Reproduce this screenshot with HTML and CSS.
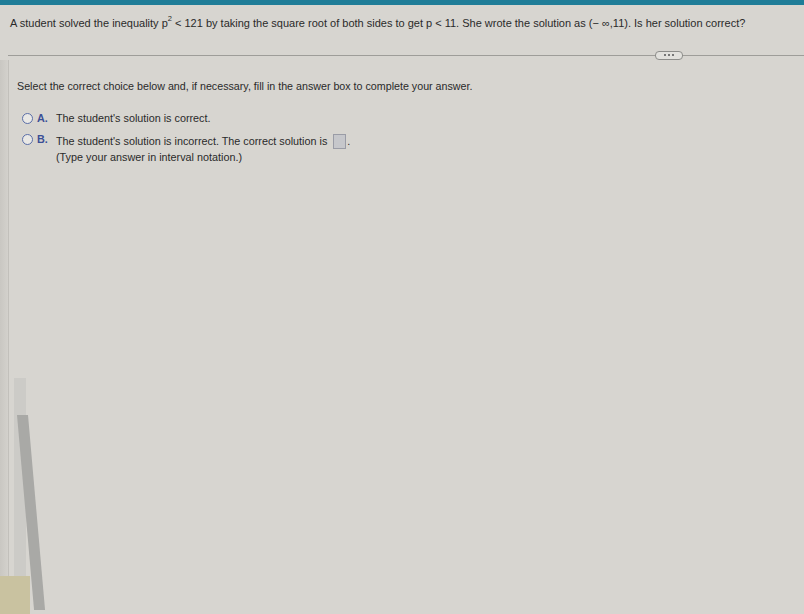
FILE: index.html
```html
<!DOCTYPE html>
<html>
<head>
<meta charset="utf-8">
<link rel="stylesheet" href="styles.css">
</head>
<body>
<div class="topbar"></div>
<div class="page">
  <div class="question">A student solved the inequality p<sup>2</sup> &lt; 121 by taking the square root of both sides to get p &lt; 11. She wrote the solution as <span class="interval">(&minus; &infin;,11)</span>. Is her solution correct?</div>
  <div class="divider">
    <div class="line"></div>
    <div class="more"><span></span><span></span><span></span></div>
    <div class="line short"></div>
  </div>
  <div class="content">
    <div class="left-col">
      <div class="track"></div>
      <div class="thumb"></div>
      <div class="patch"></div>
    </div>
    <div class="main">
      <p class="instr">Select the correct choice below and, if necessary, fill in the answer box to complete your answer.</p>
      <div class="choice">
        <span class="radio"></span><span class="letter">A.</span>
        <div class="ctext">The student's solution is correct.</div>
      </div>
      <div class="choice">
        <span class="radio"></span><span class="letter">B.</span>
        <div class="ctext">The student's solution is incorrect. The correct solution is <span class="box"></span>.<br>(Type your answer in interval notation.)</div>
      </div>
    </div>
  </div>
</div>
</body>
</html>
```
FILE: styles.css
```css
html, body {
  margin: 0;
  padding: 0;
  width: 804px;
  height: 614px;
  overflow: hidden;
  background: #d7d5d0;
  font-family: "Liberation Sans", Arial, sans-serif;
  color: #2a2a2a;
}
.topbar {
  height: 5px;
  background: #1f7d98;
}
.page {
  display: flex;
  flex-direction: column;
  height: 609px;
  overflow: hidden;
}
.question {
  font-size: 11px;
  padding: 12px 0 0 10px;
  height: 21px;
  white-space: nowrap;
}
.question sup {
  font-size: 7.5px;
  vertical-align: 6px;
  line-height: 0;
}
.divider {
  display: flex;
  align-items: center;
  margin: 12px 0 0 8px;
  height: 10px;
}
.line {
  flex: 1;
  height: 1px;
  background: #9e9d99;
}
.line.short {
  flex: 0 0 121px;
}
.more {
  width: 26px;
  height: 7px;
  border: 1px solid #8d8d8a;
  border-radius: 4px;
  background: #e2e1dd;
  display: flex;
  justify-content: center;
  align-items: center;
  gap: 2px;
}
.more span {
  width: 2px;
  height: 2px;
  background: #777;
}
.content {
  flex: 1;
  display: flex;
  position: relative;
  overflow: hidden;
}
.left-col {
  width: 8px;
  background: linear-gradient(to right, #c9c7c2, #d3d1cc);
  border-right: 1px solid #c2c0bb;
}
.track {
  position: absolute;
  left: 14px;
  top: 318px;
  width: 12px;
  height: 280px;
  background: #cccbc7;
}
.thumb {
  position: absolute;
  left: 17px;
  top: 355px;
  width: 11px;
  height: 195px;
  background: #a9a9a6;
  transform: skewX(5deg);
  transform-origin: top;
}
.patch {
  position: absolute;
  left: 0;
  bottom: 0;
  width: 30px;
  height: 38px;
  background: #c9c2a0;
}
.main {
  padding-left: 8px;
}
.instr {
  margin: 20px 0 0 0;
  font-size: 10.7px;
}
.choice {
  display: flex;
  align-items: flex-start;
  font-size: 10.8px;
  margin-left: 5px;
}
.choice:first-of-type { margin-top: 20px; }
.choice + .choice { margin-top: 7px; }
.radio {
  width: 9px;
  height: 9px;
  border: 1px solid #5a6ea8;
  border-radius: 50%;
  background: #e9e8e5;
  margin-top: 1px;
  flex: 0 0 auto;
}
.letter {
  color: #3b4f96;
  font-weight: bold;
  margin-left: 4px;
  width: 19px;
}
.ctext {
  line-height: 16px;
  margin-top: -2px;
}
.choice + .choice .ctext { margin-top: 0; }
.box {
  display: inline-block;
  width: 11px;
  height: 13px;
  border: 1px solid #9a9ca6;
  background: #c6c7cb;
  vertical-align: -4px;
  margin: 0 1px 0 3px;
}
```
